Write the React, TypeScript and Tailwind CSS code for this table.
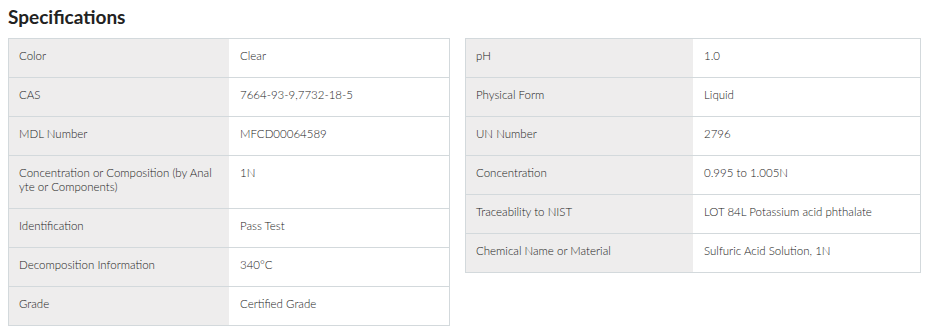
import React from "react";

const left: [string, string][] = [
  ["Color", "Clear"],
  ["CAS", "7664-93-9,7732-18-5"],
  ["MDL Number", "MFCD00064589"],
  ["Concentration or Composition (by Anal yte or Components)", "1N"],
  ["Identification", "Pass Test"],
  ["Decomposition Information", "340°C"],
  ["Grade", "Certified Grade"],
];

const right: [string, string][] = [
  ["pH", "1.0"],
  ["Physical Form", "Liquid"],
  ["UN Number", "2796"],
  ["Concentration", "0.995 to 1.005N"],
  ["Traceability to NIST", "LOT 84L Potassium acid phthalate"],
  ["Chemical Name or Material", "Sulfuric Acid Solution, 1N"],
];

function Table({ rows, width }: { rows: [string, string][]; width: string }) {
  return (
    <div className={`${width} border border-[#d3d9dc] self-start`}>
      {rows.map(([k, v], i) => (
        <div key={i} className={`grid grid-cols-2 ${i > 0 ? "border-t border-[#d3d9dc]" : ""}`}>
          <div className="bg-[#eeeded] pl-[10px] pr-[6px] pt-[10px] pb-[14px]">{k}</div>
          <div className="bg-white pl-[11px] pr-[6px] pt-[10px] pb-[14px]">{v}</div>
        </div>
      ))}
    </div>
  );
}

export default function App() {
  return (
    <div
      className="w-[930px] h-[332px] bg-white text-[#222222] text-[11.5px] leading-[14px] font-light px-[8px] pt-[5px]"
      style={{ fontFamily: "Lato, 'Liberation Sans', sans-serif" }}
    >
      <h2 className="text-[19px] leading-[23px] font-bold text-[#222] mb-[10px]">Specifications</h2>
      <div className="flex gap-[15px] items-start">
        <Table rows={left} width="w-[442px]" />
        <Table rows={right} width="w-[456px]" />
      </div>
    </div>
  );
}
